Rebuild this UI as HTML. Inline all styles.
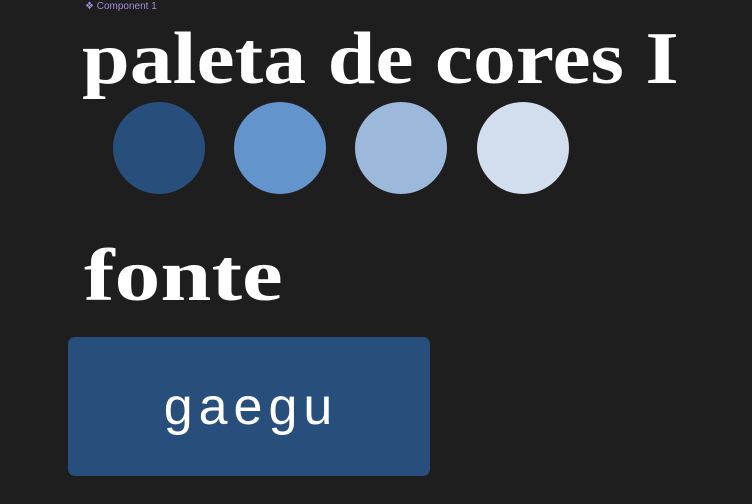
<!DOCTYPE html>
<html><head><style>
html,body{margin:0;padding:0;}
body{width:752px;height:504px;background:#1e1e1e;position:relative;overflow:hidden;font-family:"Liberation Serif",serif;}
.lbl{position:absolute;left:85px;top:1px;font:10px "Liberation Sans",sans-serif;color:#a58bdc;}
.t{position:absolute;color:#fff;font-weight:bold;font-size:74px;line-height:1;white-space:nowrap;transform-origin:0 0;}
.c{position:absolute;top:102px;width:92px;height:92px;border-radius:50%;}
.box{position:absolute;left:68px;top:337px;width:362px;height:139px;background:#284e7b;border-radius:7px;}
.g{position:absolute;left:0;width:362px;top:40px;text-align:center;color:#fff;font:52px "Liberation Sans",sans-serif;letter-spacing:6px;text-indent:4px;}
</style></head><body>
<div class="lbl">❖ Component 1</div>
<div class="t" style="left:82px;top:22px;transform:scaleX(1.16)">paleta de cores I</div>
<div class="c" style="left:113px;background:#284e7c"></div>
<div class="c" style="left:234px;background:#6394cb"></div>
<div class="c" style="left:355px;background:#9cb8da"></div>
<div class="c" style="left:477px;background:#d2deee"></div>
<div class="t" style="left:84px;top:239px;transform:scaleX(1.24)">fonte</div>
<div class="box"><div class="g">gaegu</div></div>
</body></html>
